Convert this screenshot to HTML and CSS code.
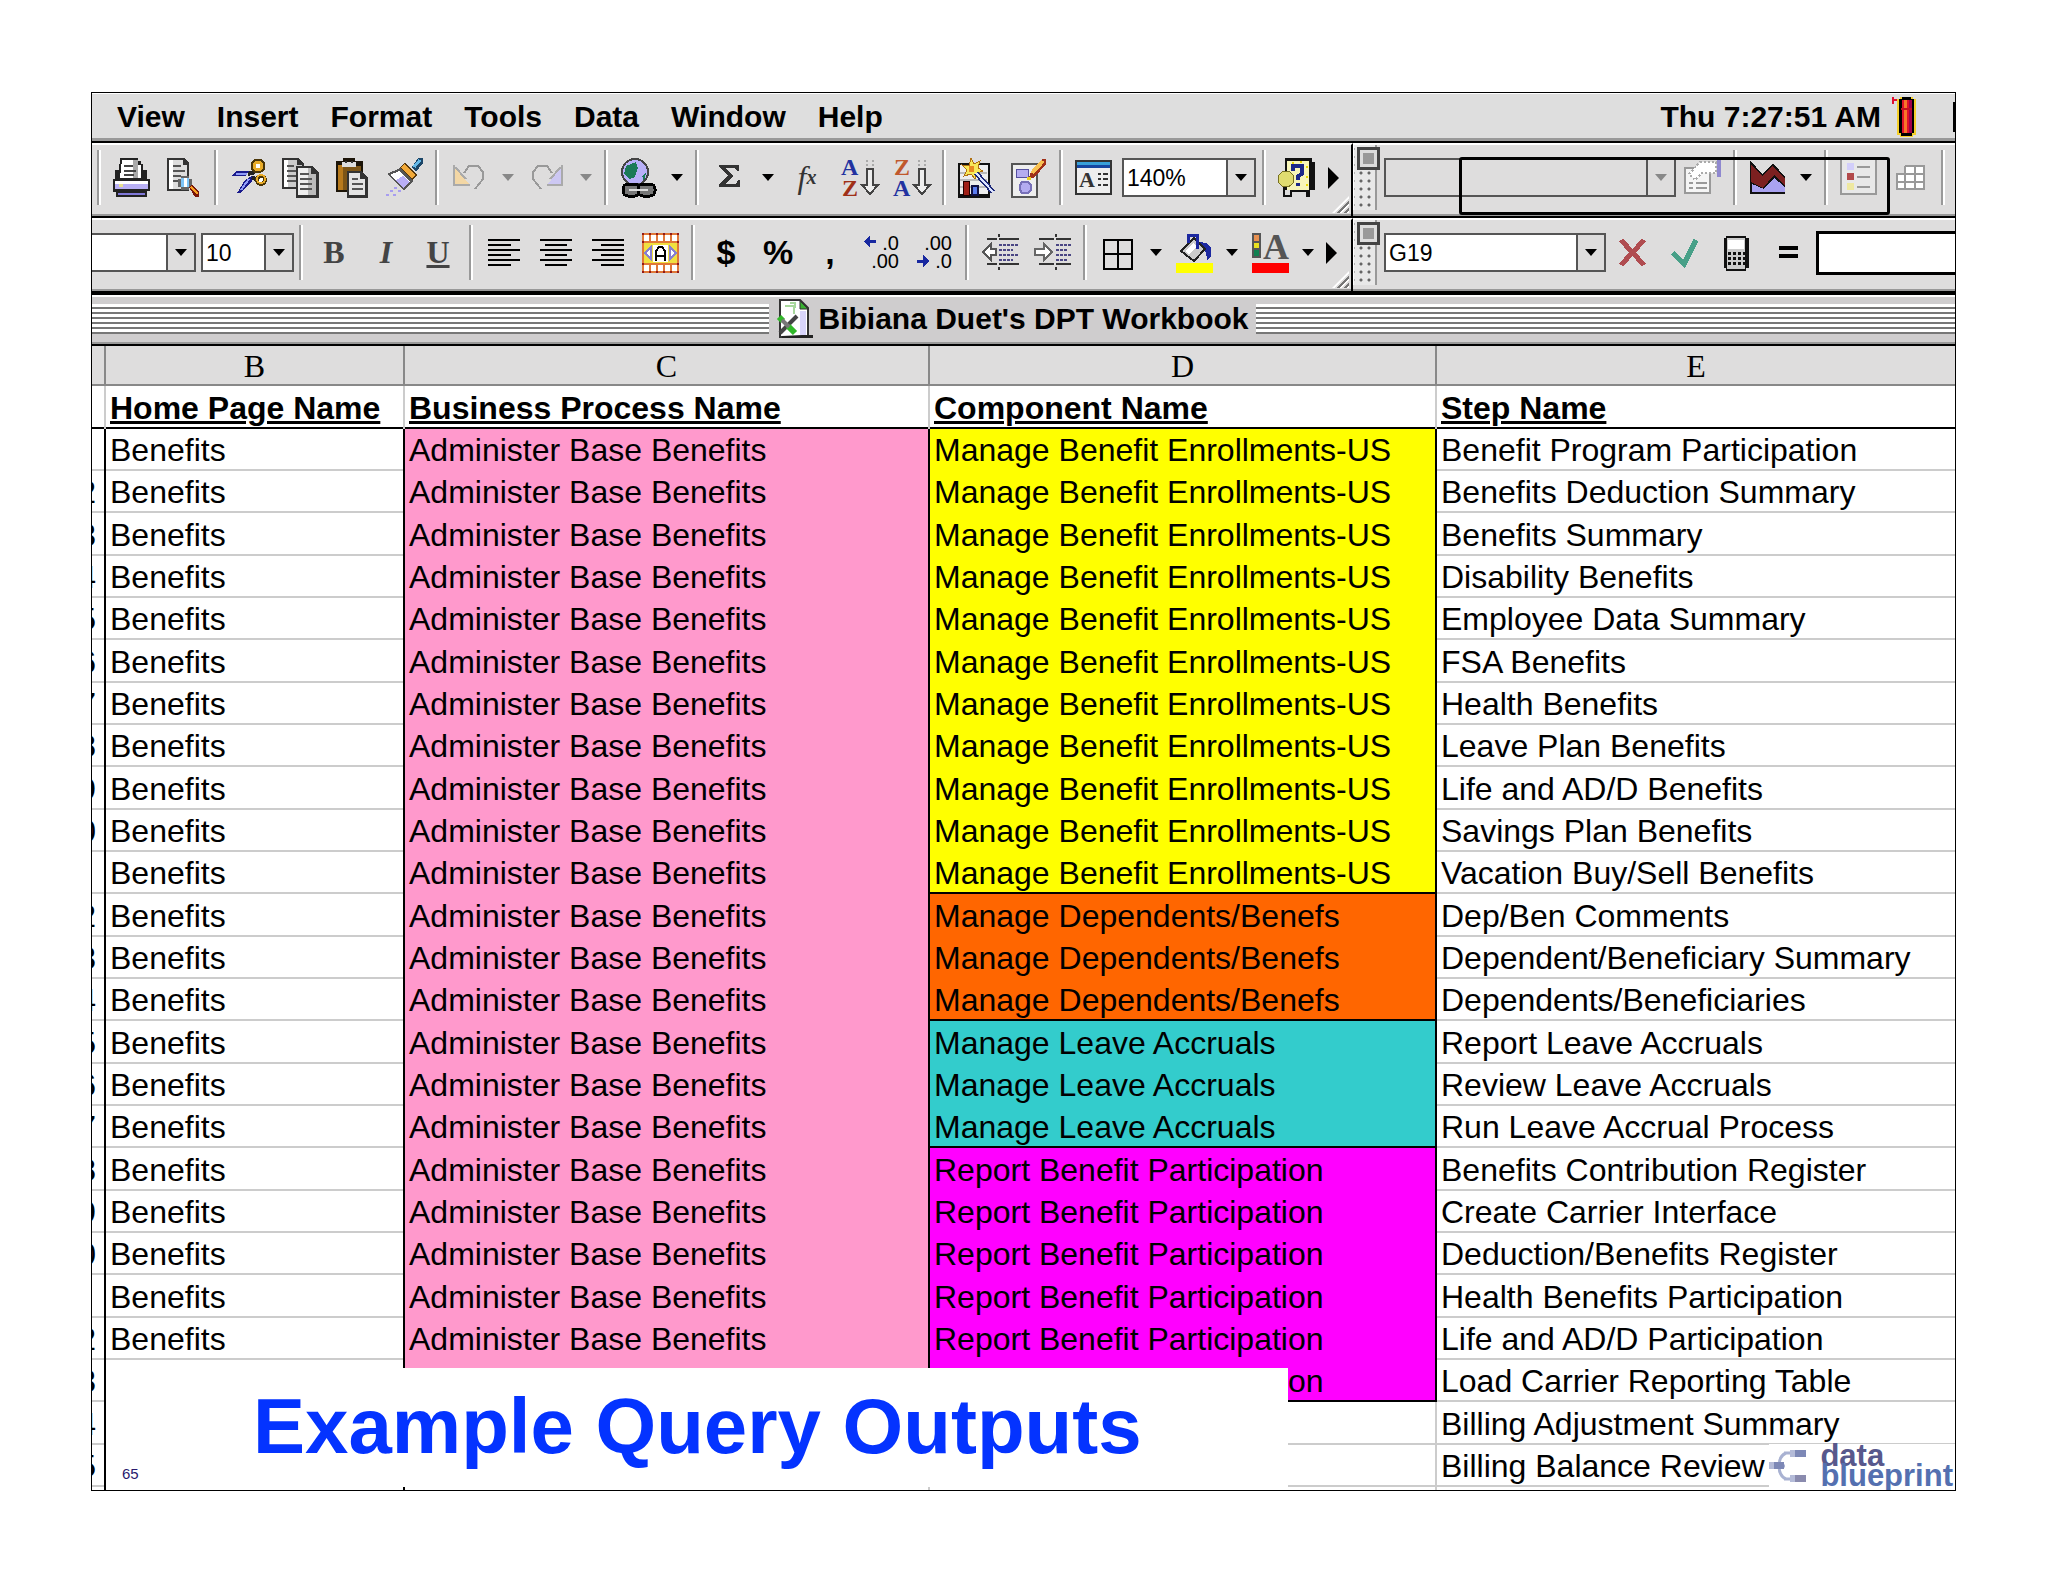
FILE: index.html
```html
<!DOCTYPE html>
<html lang="en">
<head>
    <meta charset="UTF-8">
    <title>Example Query Outputs</title>
    <link rel="stylesheet" href="styles.css">
</head>
<body>
    <main class="slide">
        <!-- Menu bar -->
        <header class="menu-bar">
            <nav class="menus">
                <button>View</button>
                <button>Insert</button>
                <button>Format</button>
                <button>Tools</button>
                <button>Data</button>
                <button>Window</button>
                <button>Help</button>
            </nav>
            <div class="clock">Thu 7:27:51 AM</div>
            <svg class="battery" width="26" height="42" viewBox="0 0 26 42">
                <path d="M0 1h2v2h3v2H2v3H0z" fill="#e01030"/>
                <path d="M8 1h13v2h3v36h-3v2H8v-2H5V3h3z" fill="#f5d02c"/>
                <path d="M10 1h9v2h3v34h-2v3H9v-3H7V3h3z" fill="#000"/>
                <path d="M10 4h9v33h-9z" fill="#e0112b"/>
                <path d="M12 4h3v33h-3z" fill="#f87528"/>
                <path d="M17 4h3v33h-3z" fill="#a00048"/>
                <path d="M9 12h11v2H9z" fill="#c41020"/>
            </svg>
            <span class="cut-menu"></span>
        </header>

        <div class="toolbars">
            <!-- Standard toolbar -->
            <div class="toolbar main-bar">
                <span class="sep"></span>
                <button aria-label="Print"><svg width="37" height="40" viewBox="0 0 37 40">
                    <path d="M7 0h18v3h3v3h2v6h4v9h3v12h-3v6H3v-5H0V21h2v-9h4z" fill="#222"/>
                    <path d="M9 2h15v5h4v13H7z" fill="#fff"/><path d="M20 2h5v18h-5z" fill="#aaa"/>
                    <path d="M11 7h9v2h-9zM11 12h12v2H11zM11 16h10v2H11z" fill="#444"/>
                    <path d="M2 23h33v4H2z" fill="#fff"/><path d="M2 26h33v5H2z" fill="#b9b0f5"/>
                    <path d="M6 26h4v3H6z" fill="#e8e090"/><path d="M5 35h27v2H5z" fill="#8078d8"/>
                </svg></button>
                <button aria-label="Print Preview"><svg width="37" height="40" viewBox="0 0 37 40">
                    <path d="M2 0h17l5 5v28H2z" fill="#333"/><path d="M4 2h14v5h4v24H4z" fill="#ddd"/><path d="M4 2h4v29H4z" fill="#fff"/>
                    <path d="M8 7h8v2H8zM8 12h12v2H8zM8 17h8v2H8zM8 22h6v2H8z" fill="#555"/>
                    <path d="M16 18h8v3h3v8h-3v3h-8v-3h-3v-8h3z" fill="#666"/><path d="M16 20h8v9h-8z" fill="#7dc4f8"/><path d="M19 20h3v9h-3z" fill="#fff"/>
                    <path d="M24 29l3-2 7 7v5h-4z" fill="#7a1508"/><path d="M26 29l7 7" stroke="#f8a020" stroke-width="2"/>
                </svg></button>
                <span class="sep"></span>
                <button aria-label="Cut"><svg width="37" height="40" viewBox="0 0 37 40">
                    <path d="M1 18L6 13h13l-3 5zM7 35l8-13 7-4v5L11 35z" fill="#1a1a8c"/><path d="M6 16h11M11 32l8-11" stroke="#8f9cf8" stroke-width="2"/>
                    <path d="M18 16l7-2M22 19l6 4" stroke="#222" stroke-width="4"/>
                    <circle cx="28" cy="8" r="5" fill="#fff" stroke="#4b3608" stroke-width="5"/><circle cx="28" cy="8" r="4" fill="none" stroke="#e9ac28" stroke-width="3"/>
                    <circle cx="31" cy="22" r="4" fill="#fff" stroke="#4b3608" stroke-width="4"/><circle cx="31" cy="21" r="4" fill="none" stroke="#e9ac28" stroke-width="2"/>
                </svg></button>
                <button aria-label="Copy"><svg width="37" height="40" viewBox="0 0 37 40">
                    <path d="M0 0h16l6 6v25H0z" fill="#333"/><path d="M2 2h13v5h5v22H2z" fill="#ccc"/><path d="M2 2h4v27H2z" fill="#fff"/>
                    <path d="M5 7h7v2H5zM5 12h9v2H5zM5 17h9v2H5zM5 22h9v2H5z" fill="#555"/>
                    <path d="M14 8h16l7 7v25H14z" fill="#333"/><path d="M16 10h13v6h5v21H16z" fill="#bbb"/><path d="M16 10h10v27H16z" fill="#eee"/>
                    <path d="M18 15h9v2h-9zM18 20h12v2H18zM18 25h12v2H18zM18 30h12v2H18z" fill="#555"/>
                </svg></button>
                <button aria-label="Paste"><svg width="37" height="40" viewBox="0 0 37 40">
                    <path d="M2 3h7V0h12v3h8v31H2z" fill="#1c1408"/><path d="M4 7h6v25H4z" fill="#b87a1c"/><path d="M9 8h18v24H9z" fill="#7d5516"/>
                    <path d="M8 4h14v5H8z" fill="#ddd"/><path d="M11 3h2v2h-2zM17 3h2v2h-2z" fill="#333"/>
                    <path d="M13 13h14l7 7v20H13z" fill="#333"/><path d="M15 15h11v6h5v16H15z" fill="#e4e4e4"/>
                    <path d="M18 20h6v2h-6zM18 25h11v2H18zM18 30h11v2H18z" fill="#555"/>
                </svg></button>
                <button aria-label="Format Painter"><svg width="37" height="40" viewBox="0 0 37 40">
                    <path d="M26 9l6-9h5v5l-7 9z" fill="#1c4668"/><path d="M28 9l6-7" stroke="#64b8e8" stroke-width="3"/>
                    <path d="M14 9l5-5 12 13-5 5z" fill="#58380c"/><path d="M17 8l11 11" stroke="#f2a938" stroke-width="5"/>
                    <path d="M1 16l13-6 13 13-9 9z" fill="#555"/><path d="M4 17l9-4 11 11-7 6z" fill="#fff"/><path d="M10 22l7-4 6 6-6 6z" fill="#b9aff6"/>
                    <path d="M8 29h3v2H8zM4 32h3v2H4zM12 32h3v2h-3zM0 36h3v2H0zM7 36h3v2H7z" fill="#a79df0"/>
                </svg></button>
                <span class="sep"></span>
                <button aria-label="Undo" disabled><svg width="37" height="40" viewBox="0 0 37 40">
                    <path d="M3 8v19h16z" fill="#f3d7a5"/><path d="M3 7v20h16M4 9l11 12" fill="none" stroke="#aaa" stroke-width="2"/>
                    <path d="M13 15l5-7h9l5 6v7l-8 10" fill="none" stroke="#999" stroke-width="2"/>
                </svg></button>
                <button class="drop" aria-label="Undo list" disabled></button>
                <button aria-label="Redo" disabled><svg width="37" height="40" viewBox="0 0 37 40">
                    <path d="M33 8v19H18z" fill="#cdc8f3"/><path d="M33 7v20H18M32 9L21 21" fill="none" stroke="#aaa" stroke-width="2"/>
                    <path d="M23 15l-5-7H9l-5 6v7l8 10" fill="none" stroke="#999" stroke-width="2"/>
                </svg></button>
                <button class="drop" aria-label="Redo list" disabled></button>
                <span class="sep"></span>
                <button aria-label="Insert Hyperlink"><svg width="37" height="40" viewBox="0 0 37 40">
                    <circle cx="15" cy="14" r="13" fill="#b8b0f8" stroke="#444" stroke-width="2"/><path d="M6 8l10-4 2 6-3 9-5 2-6-5z" fill="#1b7a58"/><path d="M22 18l4-3-2 8z" fill="#1b7a58"/>
                    <rect x="3" y="26" width="17" height="12" rx="5" fill="#777" stroke="#000" stroke-width="3"/><rect x="18" y="26" width="17" height="12" rx="5" fill="#777" stroke="#000" stroke-width="3"/>
                    <path d="M9 31h19v2H9z" fill="#ddd"/>
                </svg></button>
                <button class="drop" aria-label="Hyperlink list"></button>
                <span class="sep"></span>
                <button aria-label="AutoSum"><svg width="37" height="40" viewBox="0 0 37 40">
                    <path d="M8 7h20v6h-2l-2-3H15l7 8-8 8h11l2-4h2v7H8v-3l9-9-9-8z" fill="#333"/>
                </svg></button>
                <button class="drop" aria-label="AutoSum list"></button>
                <button class="fx" aria-label="Paste Function"><i>f</i><sub>x</sub></button>
                <button aria-label="Sort Ascending"><svg width="37" height="40" viewBox="0 0 37 40">
                    <text class="sort-letter" x="0" y="17" fill="#2232a0">A</text><text class="sort-letter" x="1" y="38" fill="#a03018">Z</text>
                    <path d="M25 3h2M31 3h2M25 7h2M31 7h2" stroke="#aaa" stroke-width="2"/><path d="M26 11h6v16h5l-8 9-8-9h5z" fill="#eee" stroke="#444" stroke-width="2"/>
                </svg></button>
                <button aria-label="Sort Descending"><svg width="37" height="40" viewBox="0 0 37 40">
                    <text class="sort-letter" x="1" y="17" fill="#c0582c">Z</text><text class="sort-letter" x="0" y="38" fill="#2232a0">A</text>
                    <path d="M25 3h2M31 3h2M25 7h2M31 7h2" stroke="#aaa" stroke-width="2"/><path d="M26 11h6v16h5l-8 9-8-9h5z" fill="#eee" stroke="#444" stroke-width="2"/>
                </svg></button>
                <span class="sep"></span>
                <button aria-label="Chart Wizard"><svg width="37" height="40" viewBox="0 0 37 40">
                    <path d="M0 5h32v35H0z" fill="#111"/><path d="M2 7h28v29H2z" fill="#eee"/><path d="M2 15h27M2 22h27M2 29h27" stroke="#bbb" stroke-width="2"/>
                    <path d="M5 23h6v14H5z" fill="#a02018" stroke="#200" stroke-width="1"/><path d="M14 28h6v9h-6z" fill="#5b7cf0" stroke="#114" stroke-width="2"/>
                    <path d="M13 0l3 6 6-3-2 7 5 3-6 2-2 6-4-5-7 2 3-6-5-5 7 1z" fill="#f8e858" stroke="#b07010" stroke-width="1"/><path d="M11 8h5v6h-5z" fill="#e88a20"/>
                    <path d="M18 15l17 19" stroke="#1c2878" stroke-width="5"/><path d="M18 15l17 19" stroke="#dce4ff" stroke-width="2"/>
                </svg></button>
                <button aria-label="Drawing"><svg width="37" height="40" viewBox="0 0 37 40">
                    <path d="M2 6h25v33H2z" fill="#eee" stroke="#555" stroke-width="2"/><path d="M6 11h12v8H6z" fill="#b4acf0" stroke="#5550a0" stroke-width="1"/>
                    <path d="M12 24h6l3 3v5l-3 3h-6l-2-3v-5z" fill="#b4acf0" stroke="#7770b8" stroke-width="2"/>
                    <path d="M18 22l3-8L32 1h4v5L25 19z" fill="#a03018"/><path d="M22 15L33 3" stroke="#f8c050" stroke-width="4"/><path d="M17 19h4v3h-4z" fill="#e8d020"/>
                </svg></button>
                <span class="sep"></span>
                <button aria-label="Formatting Palette"><svg width="37" height="40" viewBox="0 0 37 40">
                    <path d="M1 3h35v33H1z" fill="#eee" stroke="#333" stroke-width="2"/><path d="M2 4h33v3H2z" fill="#38a0d8"/><path d="M2 7h33v3H2z" fill="#1646a0"/>
                    <text class="palette-letter" x="4" y="29">A</text><path d="M23 16h3M28 16h5M23 21h3M28 21h5M23 27h3M28 27h5" stroke="#333" stroke-width="2"/>
                </svg></button>
                <label class="combo zoom-box"><select aria-label="Zoom"><option>140%</option></select><span class="arrow"></span></label>
                <span class="sep"></span>
                <button aria-label="Help"><svg width="37" height="40" viewBox="0 0 37 40">
                    <path d="M7 0h27v4h3v28h-5v7h-4v-5H14v5H5V28l2-2z" fill="#111"/><path d="M9 3h22v29H9z" fill="#f7f5b8"/>
                    <path d="M14 4h2v2h-2zM22 3h2v2h-2zM28 8h2v2h-2zM28 18h2v2h-2zM28 26h2v2h-2zM13 9h2v2h-2z" fill="#e8d800"/>
                    <path d="M15 13V8h9v8l-4 2v4M20 25v3" fill="none" stroke="#1c2888" stroke-width="4"/>
                    <circle cx="8" cy="21" r="8" fill="#e0dc70" stroke="#777020" stroke-width="1"/><path d="M7 32h5v5H7z" fill="#ddd"/>
                </svg></button>
                <span class="more"></span>
                <span class="resize"></span>
            </div>
            <!-- Chart toolbar -->
            <div class="toolbar side-bar">
                <span class="grip"></span>
                <label class="combo chart-box"><select aria-label="Chart Objects" disabled><option></option></select><span class="arrow dim"></span></label>
                <button aria-label="Format Object" disabled><svg width="37" height="40" viewBox="0 0 37 40">
                    <path d="M1 10h25v25H1z" fill="#f5f5f5" stroke="#999" stroke-width="2"/><path d="M5 25h4M12 25h11M5 30h4M12 30h11" stroke="#999" stroke-width="2"/>
                    <path d="M5 16l11-12h16v11H18l-7 7z" fill="#fff" stroke="#aaa" stroke-width="2" stroke-dasharray="2 2"/><path d="M33 2h4v17h-4z" fill="#8f88cf"/>
                </svg></button>
                <span class="sep"></span>
                <button aria-label="Chart Type"><svg width="37" height="40" viewBox="0 0 37 40">
                    <path d="M1 2l12 14L24 5l12 14v17H1z" fill="#111"/><path d="M2 6l11 12L24 8l12 13v7L25 17 14 30 2 24z" fill="#7c2020"/><path d="M3 26l12 5 10-11 11 9v5H3z" fill="#a9a2f0"/>
                </svg></button>
                <button class="drop" aria-label="Chart Type list"></button>
                <span class="sep"></span>
                <button aria-label="Legend" disabled><svg width="37" height="40" viewBox="0 0 37 40">
                    <path d="M1 1h35v35H1z" fill="#e8e8e8" stroke="#999" stroke-width="2"/><path d="M7 5h7v7H7z" fill="#d2cefa"/><path d="M7 15h7v7H7z" fill="#b24a4a"/><path d="M7 25h7v7H7z" fill="#eee8a0"/>
                    <path d="M17 9h13M17 19h13M17 29h13" stroke="#999" stroke-width="2"/>
                </svg></button>
                <button aria-label="Data Table" disabled><svg width="37" height="40" viewBox="0 0 37 40">
                    <path d="M4 16h9V8h20v23H4z" fill="#fff"/><path d="M4 16h29M4 24h29M4 31h29M13 8h20M5 16v15M13 8v23M23 8v23M32 8v23" fill="none" stroke="#999" stroke-width="2"/>
                </svg></button>
                <span class="sep"></span>
                <div class="drag-outline"></div>
            </div>

            <!-- Formatting toolbar -->
            <div class="toolbar main-bar format-bar">
                <label class="combo font-box"><select aria-label="Font"><option></option></select><span class="arrow"></span></label>
                <label class="combo size-box"><select aria-label="Font Size"><option>10</option></select><span class="arrow"></span></label>
                <span class="sep"></span>
                <button class="letter">B</button>
                <button class="letter italic">I</button>
                <button class="letter underline">U</button>
                <span class="sep"></span>
                <button aria-label="Align Left"><svg width="37" height="40" viewBox="0 0 37 40"><path d="M2 7h32M2 12h23M2 17h32M2 22h23M2 27h32M2 32h23" stroke="#000" stroke-width="2"/></svg></button>
                <button aria-label="Center"><svg width="37" height="40" viewBox="0 0 37 40"><path d="M2 7h32M7 12h22M2 17h32M7 22h22M2 27h32M7 32h22" stroke="#000" stroke-width="2"/></svg></button>
                <button aria-label="Align Right"><svg width="37" height="40" viewBox="0 0 37 40"><path d="M2 7h32M11 12h23M2 17h32M11 22h23M2 27h32M11 32h23" stroke="#000" stroke-width="2"/></svg></button>
                <button aria-label="Merge and Center"><svg width="37" height="40" viewBox="0 0 37 40">
                    <path d="M0 0h37v40H0z" fill="#fff"/><path d="M0 10h37v20H0z" fill="#f0e040"/>
                    <path d="M1 0v40M8 0v10M8 30v10M15 0v10M15 30v10M22 0v10M22 30v10M29 0v10M29 30v10M36 0v40M0 1h37M0 9h37M0 31h37M0 39h37" stroke="#e07838" stroke-width="2"/>
                    <path d="M0 0h2v2H0zM7 0h2v2H7zM14 0h2v2h-2zM21 0h2v2h-2zM28 0h2v2h-2zM35 0h2v2h-2zM0 38h2v2H0zM7 38h2v2H7zM14 38h2v2h-2zM21 38h2v2h-2zM28 38h2v2h-2zM35 38h2v2h-2zM0 8h2v2H0zM35 8h2v2h-2zM0 30h2v2H0zM35 30h2v2h-2z" fill="#901818"/>
                    <path d="M3 20l6-6v12zM34 20l-6-6v12z" fill="#fff" stroke="#8880d0" stroke-width="2"/><path d="M11 12h15v17H11z" fill="#fff"/>
                    <path d="M14 28V18l3-4h3l3 4v10M14 23h9" fill="none" stroke="#000" stroke-width="2"/>
                </svg></button>
                <span class="sep"></span>
                <button class="symbol">$</button>
                <button class="symbol">%</button>
                <button class="symbol">,</button>
                <button aria-label="Increase Decimal"><svg width="37" height="40" viewBox="0 0 37 40">
                    <path d="M0 8l6-6v5h6v3H6v5z" fill="#1828a0"/><text class="digits" x="35" y="17" text-anchor="end">.0</text><text class="digits" x="35" y="35" text-anchor="end">.00</text>
                </svg></button>
                <button aria-label="Decrease Decimal"><svg width="37" height="40" viewBox="0 0 37 40">
                    <path d="M13 28l-6-6v5H1v3h6v5z" fill="#1828a0"/><text class="digits" x="36" y="17" text-anchor="end">.00</text><text class="digits" x="36" y="35" text-anchor="end">.0</text>
                </svg></button>
                <span class="sep"></span>
                <button aria-label="Decrease Indent"><svg width="37" height="40" viewBox="0 0 37 40">
                    <path d="M5 6h10M17 6h20M5 31h10M17 31h20" stroke="#333" stroke-width="2"/><path d="M17 12h19M17 17h14M17 22h19M17 27h14" stroke="#4a4684" stroke-width="2" stroke-dasharray="3 1"/>
                    <path d="M1 19l8-8v5h5v6H9v5z" fill="#fff" stroke="#555" stroke-width="2"/><path d="M17 1v3M17 34v3" stroke="#333" stroke-width="2"/>
                </svg></button>
                <button aria-label="Increase Indent"><svg width="37" height="40" viewBox="0 0 37 40">
                    <path d="M5 6h15M22 6h15M5 31h15M22 31h15" stroke="#333" stroke-width="2"/><path d="M22 12h15M22 17h11M22 22h15M22 27h11" stroke="#4a4684" stroke-width="2" stroke-dasharray="3 1"/>
                    <path d="M18 19l-8-8v5H1v6h9v5z" fill="#fff" stroke="#666" stroke-width="2"/><path d="M22 1v3M22 34v3" stroke="#333" stroke-width="2"/>
                </svg></button>
                <span class="sep"></span>
                <button aria-label="Borders"><svg width="37" height="40" viewBox="0 0 37 40"><path d="M4 7h28v29H4zM18 7v29M4 21h28" fill="none" stroke="#000" stroke-width="2"/></svg></button>
                <button class="drop" aria-label="Borders list"></button>
                <button aria-label="Fill Color"><svg width="37" height="40" viewBox="0 0 37 40">
                    <path d="M0 30h37v10H0z" fill="#ff0"/><path d="M23 9l8 1 4 5v8l-4 4-1-8-5-4z" fill="#1c28a0"/>
                    <path d="M5 18L18 5l11 11-11 12z" fill="#ccc" stroke="#222" stroke-width="2"/><path d="M9 18l8-8 4 3-8 9z" fill="#fff"/><path d="M12 10V2h9v14" fill="none" stroke="#1c28a0" stroke-width="3"/>
                </svg></button>
                <button class="drop" aria-label="Fill Color list"></button>
                <button aria-label="Font Color"><svg width="37" height="40" viewBox="0 0 37 40">
                    <path d="M0 30h37v10H0z" fill="#f00"/><path d="M0 0h9v25H0z" fill="#555"/><path d="M2 2h5v6H2z" fill="#e89050"/><path d="M2 10h5v5H2z" fill="#e8e020"/><path d="M2 17h5v6H2z" fill="#108050"/>
                    <text class="color-letter" x="11" y="26">A</text>
                </svg></button>
                <button class="drop" aria-label="Font Color list"></button>
                <span class="more"></span>
                <span class="resize"></span>
            </div>
            <!-- Formula bar -->
            <div class="toolbar side-bar">
                <span class="grip"></span>
                <label class="combo name-box"><select aria-label="Name Box"><option>G19</option></select><span class="arrow"></span></label>
                <button aria-label="Cancel"><svg width="37" height="40" viewBox="0 0 37 40"><path d="M7 7l23 25M30 7L7 32" stroke="#b04c50" stroke-width="5"/></svg></button>
                <button aria-label="Enter"><svg width="37" height="40" viewBox="0 0 37 40"><path d="M7 20l11 11L30 7" fill="none" stroke="#48a088" stroke-width="5"/></svg></button>
                <button aria-label="Calculator"><svg width="37" height="40" viewBox="0 0 37 40">
                    <path d="M8 3h20v2h3v30h-3v3H8v-3H6V5h2z" fill="#111"/><path d="M9 5h18v31H9z" fill="#ccc"/><path d="M10 7h16v9H10z" fill="#fff"/>
                    <path d="M10 20h17M10 25h17M10 30h17" stroke="#111" stroke-width="3" stroke-dasharray="3 2"/>
                </svg></button>
                <button aria-label="Edit Formula"><svg width="37" height="40" viewBox="0 0 37 40"><path d="M9 15h19M9 23h19" stroke="#000" stroke-width="4"/></svg></button>
                <input class="formula" type="text" aria-label="Formula">
            </div>
        </div>

        <!-- Workbook title bar -->
        <div class="title-bar">
            <span class="stripes"></span>
            <h1>
                <svg width="36" height="40" viewBox="0 0 36 40">
                    <path d="M3 1h20l8 8v29H3z" fill="#fff" stroke="#333" stroke-width="2"/><path d="M23 2v8h8z" fill="#38b030" stroke="#333" stroke-width="1"/>
                    <path d="M8 7h9v8M13 4h5v5" fill="none" stroke="#a8d89c" stroke-width="2"/><path d="M25 36h11v3H5v-2z" fill="#222"/><path d="M23 12h6v24h-6z" fill="#d8d4fa"/>
                    <path d="M3 34L20 17" stroke="#444" stroke-width="4"/><path d="M2 18l4 4M11 27l7 7" stroke="#30b828" stroke-width="6"/><path d="M5 21l7 7" stroke="#777" stroke-width="4"/>
                </svg>
                Bibiana Duet's DPT Workbook
            </h1>
            <span class="stripes stripes-right"></span>
        </div>

        <!-- Worksheet -->
        <table class="sheet">
            <colgroup><col class="col-num"><col class="col-b"><col class="col-c"><col class="col-d"><col></colgroup>
            <thead>
                <tr class="letters"><th></th><th>B</th><th>C</th><th>D</th><th>E</th></tr>
                <tr class="fields"><th></th><th>Home Page Name</th><th>Business Process Name</th><th>Component Name</th><th>Step Name</th></tr>
            </thead>
            <tbody>
                <tr><td></td><td>Benefits</td><td class="pink">Administer Base Benefits</td><td class="yellow">Manage Benefit Enrollments-US</td><td>Benefit Program Participation</td></tr>
                <tr><td>2</td><td>Benefits</td><td class="pink">Administer Base Benefits</td><td class="yellow">Manage Benefit Enrollments-US</td><td>Benefits Deduction Summary</td></tr>
                <tr><td>3</td><td>Benefits</td><td class="pink">Administer Base Benefits</td><td class="yellow">Manage Benefit Enrollments-US</td><td>Benefits Summary</td></tr>
                <tr><td>4</td><td>Benefits</td><td class="pink">Administer Base Benefits</td><td class="yellow">Manage Benefit Enrollments-US</td><td>Disability Benefits</td></tr>
                <tr><td>5</td><td>Benefits</td><td class="pink">Administer Base Benefits</td><td class="yellow">Manage Benefit Enrollments-US</td><td>Employee Data Summary</td></tr>
                <tr><td>6</td><td>Benefits</td><td class="pink">Administer Base Benefits</td><td class="yellow">Manage Benefit Enrollments-US</td><td>FSA Benefits</td></tr>
                <tr><td>7</td><td>Benefits</td><td class="pink">Administer Base Benefits</td><td class="yellow">Manage Benefit Enrollments-US</td><td>Health Benefits</td></tr>
                <tr><td>8</td><td>Benefits</td><td class="pink">Administer Base Benefits</td><td class="yellow">Manage Benefit Enrollments-US</td><td>Leave Plan Benefits</td></tr>
                <tr><td>9</td><td>Benefits</td><td class="pink">Administer Base Benefits</td><td class="yellow">Manage Benefit Enrollments-US</td><td>Life and AD/D Benefits</td></tr>
                <tr><td>0</td><td>Benefits</td><td class="pink">Administer Base Benefits</td><td class="yellow">Manage Benefit Enrollments-US</td><td>Savings Plan Benefits</td></tr>
                <tr><td></td><td>Benefits</td><td class="pink">Administer Base Benefits</td><td class="yellow group-end">Manage Benefit Enrollments-US</td><td>Vacation Buy/Sell Benefits</td></tr>
                <tr><td>2</td><td>Benefits</td><td class="pink">Administer Base Benefits</td><td class="orange">Manage Dependents/Benefs</td><td>Dep/Ben Comments</td></tr>
                <tr><td>3</td><td>Benefits</td><td class="pink">Administer Base Benefits</td><td class="orange">Manage Dependents/Benefs</td><td>Dependent/Beneficiary Summary</td></tr>
                <tr><td>4</td><td>Benefits</td><td class="pink">Administer Base Benefits</td><td class="orange group-end">Manage Dependents/Benefs</td><td>Dependents/Beneficiaries</td></tr>
                <tr><td>5</td><td>Benefits</td><td class="pink">Administer Base Benefits</td><td class="teal">Manage Leave Accruals</td><td>Report Leave Accruals</td></tr>
                <tr><td>6</td><td>Benefits</td><td class="pink">Administer Base Benefits</td><td class="teal">Manage Leave Accruals</td><td>Review Leave Accruals</td></tr>
                <tr><td>7</td><td>Benefits</td><td class="pink">Administer Base Benefits</td><td class="teal group-end">Manage Leave Accruals</td><td>Run Leave Accrual Process</td></tr>
                <tr><td>8</td><td>Benefits</td><td class="pink">Administer Base Benefits</td><td class="magenta">Report Benefit Participation</td><td>Benefits Contribution Register</td></tr>
                <tr><td>9</td><td>Benefits</td><td class="pink">Administer Base Benefits</td><td class="magenta">Report Benefit Participation</td><td>Create Carrier Interface</td></tr>
                <tr><td>0</td><td>Benefits</td><td class="pink">Administer Base Benefits</td><td class="magenta">Report Benefit Participation</td><td>Deduction/Benefits Register</td></tr>
                <tr><td></td><td>Benefits</td><td class="pink">Administer Base Benefits</td><td class="magenta">Report Benefit Participation</td><td>Health Benefits Participation</td></tr>
                <tr><td>2</td><td>Benefits</td><td class="pink">Administer Base Benefits</td><td class="magenta">Report Benefit Participation</td><td>Life and AD/D Participation</td></tr>
                <tr><td>3</td><td>Benefits</td><td class="pink">Administer Base Benefits</td><td class="magenta group-end">Report Benefit Participation</td><td>Load Carrier Reporting Table</td></tr>
                <tr class="plain"><td>4</td><td></td><td></td><td></td><td>Billing Adjustment Summary</td></tr>
                <tr class="plain"><td>5</td><td></td><td></td><td></td><td>Billing Balance Review</td></tr>
            </tbody>
            <tfoot>
                <tr class="plain"><td></td><td></td><td></td><td></td><td></td></tr>
            </tfoot>
        </table>

        <!-- Slide caption and logo over the sheet -->
        <div class="caption">
            <h2>Example Query Outputs</h2>
            <span class="page-number">65</span>
        </div>
        <div class="logo">
            <svg width="38" height="36" viewBox="0 0 38 36">
                <path d="M15 5h8M15 31h8M12 18h4M17 5q-7 3-7 13t7 13" fill="none" stroke="#a9b2d2" stroke-width="3"/>
                <path d="M21 2h16v7H21zM0 14h15v7H0z" fill="#7d88b6"/><path d="M21 27h16v7H21z" fill="#8a8bae"/><path d="M21 2h5v7h-5zM0 14h5v7H0zM21 27h5v7h-5z" fill="#b4bbd8"/>
            </svg>
            <div class="logo-name"><span>data</span><span>blueprint</span></div>
        </div>
    </main>
</body>
</html>
```

FILE: styles.css
```css
* {
    box-sizing: border-box;
}

body {
    margin: 0;
    padding: 92px 92px 91px 91px;
    background-color: #fff;
    font-family: "Liberation Sans", Arial, sans-serif;
    color: #000;
}

.slide {
    position: relative;
    border: 1px solid #000;
    overflow: hidden;
}

button {
    border: none;
    background: none;
    padding: 0;
    font-family: inherit;
    color: #000;
}

svg {
    overflow: visible;
}

/* Menu bar */
.menu-bar {
    display: flex;
    align-items: center;
    height: 50px;
    padding: 0 0 2px 25px;
    background-color: #dedede;
    border-top: 1px solid #fff;
    border-bottom: 2px solid #000;
    box-shadow: inset 0 -3px #999;
}

.menus {
    display: flex;
    gap: 32px;
    flex: 1;
}

.menus button,
.clock,
.title-bar h1 {
    font-size: 30px;
    font-weight: bold;
    line-height: 40px;
}

.battery {
    margin-left: 11px;
}

.cut-menu {
    width: 2px;
    height: 30px;
    margin-left: 35px;
    background-color: #000;
}

/* Toolbars: two rows, each split into a main part and a side part */
.toolbars {
    display: grid;
    grid-template-columns: 1261px minmax(0, 1fr);
    border-bottom: 2px solid #000;
}

.toolbar {
    position: relative;
    display: flex;
    align-items: center;
    height: 75px;
    padding-bottom: 6px;
    background-color: #dedddd;
    border-top: 2px solid #fff;
    border-bottom: 2px solid #000;
    box-shadow: inset 0 -2px #999;
}

.main-bar {
    border-right: 2px solid #000;
}

.toolbar button {
    display: flex;
    align-items: center;
    justify-content: center;
    flex: none;
    width: 52px;
    height: 54px;
}

.toolbar svg {
    shape-rendering: crispEdges;
}

.toolbar .drop {
    width: 26px;
}

.format-bar .drop {
    width: 24px;
}

.drop::after,
.arrow::after {
    content: "";
    border: 6px solid transparent;
    border-top: 7px solid #000;
    border-bottom: none;
}

.drop:disabled::after,
.dim::after {
    border-top-color: #888;
}

.sep {
    flex: none;
    width: 13px;
    height: 55px;
    background: linear-gradient(90deg, #999 50%, #fff 50%) center / 4px 100% no-repeat;
}

.format-bar .sep {
    width: 14px;
}

/* Drop-down boxes */
.combo {
    display: flex;
    flex: none;
    height: 39px;
    border: 2px solid #555;
}

.combo select {
    appearance: none;
    flex: 1;
    min-width: 0;
    border: none;
    border-radius: 0;
    padding: 0 3px;
    background-color: #fff;
    color: #000;
    font: 23px "Liberation Sans", Arial, sans-serif;
}

.combo select:disabled {
    background-color: #dedddd;
}

.arrow {
    display: flex;
    align-items: center;
    justify-content: center;
    width: 28px;
    border-left: 2px solid #555;
}

.zoom-box {
    width: 134px;
    margin: 0 1px 0 3px;
}

.font-box {
    width: 104px;
    border-left: none;
}

.size-box {
    width: 93px;
    margin-left: 5px;
}

.chart-box {
    width: 292px;
}

.name-box {
    width: 222px;
}

/* Toolbar glyphs */
.toolbar .fx {
    font: 32px "Liberation Serif", "Times New Roman", serif;
    color: #333;
}

.fx sub {
    font-size: 20px;
    font-weight: bold;
    font-style: italic;
}

.sort-letter {
    font: bold 24px "Liberation Serif", "Times New Roman", serif;
}

.palette-letter {
    font: bold 22px "Liberation Serif", "Times New Roman", serif;
    fill: #333;
}

.color-letter {
    font: bold 36px "Liberation Serif", "Times New Roman", serif;
    fill: #555;
}

.digits {
    font: 20px "Liberation Sans", Arial, sans-serif;
}

.toolbar .letter {
    font: bold 32px "Liberation Serif", "Times New Roman", serif;
    color: #444;
}

.toolbar .italic {
    font-style: italic;
}

.toolbar .underline {
    text-decoration: underline;
}

.symbol {
    font-size: 34px;
    font-weight: bold;
}

.more {
    margin-left: 6px;
    border: 11px solid transparent;
    border-left-color: #000;
    border-right: none;
}

.resize {
    position: absolute;
    right: 2px;
    bottom: 3px;
    width: 17px;
    height: 17px;
    background: repeating-linear-gradient(135deg, #777 0 2px, #fff 2px 4px, #dedddd 4px 5px);
    clip-path: polygon(100% 0, 100% 100%, 0 100%);
}

/* Drag handle with its close box */
.grip {
    flex: none;
    align-self: stretch;
    width: 24px;
    margin-right: 7px;
    padding: 2px 3px;
    border-left: 1px solid #fff;
    border-right: 2px solid #999;
    background: radial-gradient(circle, #666 1px, transparent 2px) 3px 0 / 8px 8px;
    background-color: #e8e8e8;
}

.grip::before {
    content: "";
    display: block;
    width: 17px;
    height: 17px;
    border: 3px solid #444;
    background-color: #999;
    box-shadow: inset 0 0 0 3px #ddd;
}

.drag-outline {
    position: absolute;
    left: 106px;
    right: 65px;
    top: 12px;
    bottom: 1px;
    border: 3px solid #000;
    border-radius: 3px;
}

.formula {
    flex: 1;
    min-width: 0;
    height: 44px;
    margin-left: 2px;
    border: 3px solid #000;
    border-right: none;
    border-radius: 0;
    font-size: 23px;
}

/* Workbook title bar */
.title-bar {
    display: flex;
    align-items: center;
    height: 51px;
    padding-bottom: 3px;
    background-color: #cfcdce;
    border-top: 2px solid #fff;
    border-bottom: 2px solid #000;
    box-shadow: inset 0 -2px #999;
}

.title-bar h1 {
    display: flex;
    align-items: center;
    gap: 6px;
    margin: 0 8px;
    white-space: nowrap;
}

.stripes {
    flex: 1 1 0;
    height: 30px;
    background: repeating-linear-gradient(#fff 0 3px, #777 3px 5px);
}

.stripes-right {
    flex-basis: 22px;
}

/* Worksheet, grid lines are inset shadows so the column rules stay unbroken */
.sheet {
    width: 100%;
    table-layout: fixed;
    border-collapse: separate;
    border-spacing: 0;
    font-size: 32px;
}

.col-num {
    width: 12px;
}

.col-b {
    width: 299px;
}

.col-c {
    width: 525px;
}

.col-d {
    width: 507px;
}

.sheet th,
.sheet td {
    height: 42px;
    padding: 2px 0 2px 4px;
    border-left: 2px solid #000;
    box-shadow: inset 0 -2px #ccc;
    line-height: 38px;
    text-align: left;
    white-space: nowrap;
    overflow: hidden;
}

.sheet tbody tr:nth-child(3n) td {
    height: 43px;
}

.sheet th:first-child,
.sheet td:first-child {
    direction: rtl;
    padding-right: 8px;
    padding-left: 0;
    border-left: none;
    text-align: right;
}

.sheet .letters th {
    height: 40px;
    padding: 0;
    background-color: #dedddd;
    border-left-color: #888;
    box-shadow: inset 0 -2px #888;
    font: 32px "Liberation Serif", "Times New Roman", serif;
    text-align: center;
}

.sheet .fields th {
    height: 43px;
    border-left-color: #ccc;
    box-shadow: inset 0 -2px #000;
    text-decoration: underline;
}

.sheet .pink {
    background-color: #ff99cc;
    box-shadow: none;
}

.sheet .yellow {
    background-color: #ffff00;
    box-shadow: none;
}

.sheet .orange {
    background-color: #ff6600;
    box-shadow: none;
}

.sheet .teal {
    background-color: #33cccc;
    box-shadow: none;
}

.sheet .magenta {
    background-color: #ff00ff;
    box-shadow: none;
}

.sheet .group-end {
    box-shadow: inset 0 -2px #000;
}

.sheet .plain td:nth-child(n+4) {
    border-left-color: #ccc;
}

.sheet tfoot td {
    height: 3px;
    padding: 0;
    box-shadow: none;
    line-height: 0;
}

/* Caption laid over the lower rows */
.caption {
    position: absolute;
    left: 14px;
    bottom: 3px;
    width: 1182px;
    height: 119px;
    padding-top: 14px;
    background-color: #fff;
}

.caption h2 {
    margin: 0;
    padding-left: 147px;
    font-size: 78px;
    line-height: 88px;
    color: #0433ff;
    white-space: nowrap;
}

.page-number {
    display: block;
    padding-left: 16px;
    font-size: 15px;
    line-height: 8px;
    color: #2a1a6e;
}

.logo {
    position: absolute;
    right: 0;
    bottom: 0;
    display: flex;
    align-items: center;
    gap: 13px;
    height: 46px;
    padding: 0 2px 2px 0;
    background-color: #fff;
}

.logo-name {
    display: flex;
    flex-direction: column;
    font-size: 31px;
    font-weight: bold;
    line-height: 20px;
    color: #5470b0;
}

.logo-name span:first-child {
    color: #58588c;
}
```
